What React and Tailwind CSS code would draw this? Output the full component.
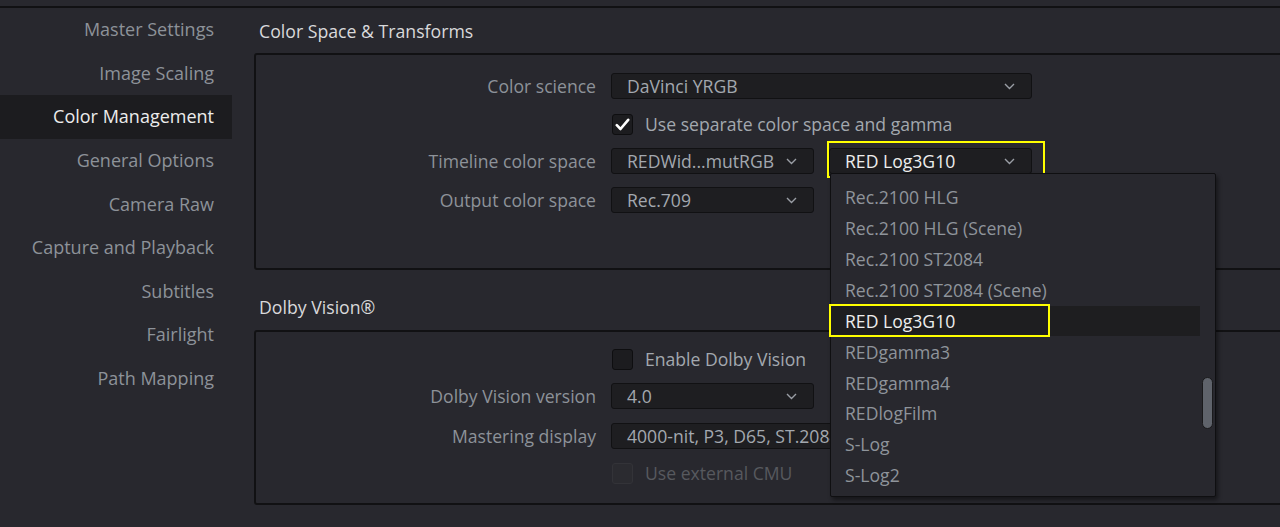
import React from 'react';

const FONT = { fontFamily: '"Open Sans", "Noto Sans", sans-serif' };

const sideItems = [
    'Master Settings',
    'Image Scaling',
    'Color Management',
    'General Options',
    'Camera Raw',
    'Capture and Playback',
    'Subtitles',
    'Fairlight',
    'Path Mapping',
];

const listItems = [
    'Rec.2100 HLG',
    'Rec.2100 HLG (Scene)',
    'Rec.2100 ST2084',
    'Rec.2100 ST2084 (Scene)',
    'RED Log3G10',
    'REDgamma3',
    'REDgamma4',
    'REDlogFilm',
    'S-Log',
    'S-Log2',
];

const Chevron = () => (
    <svg width="11" height="7" viewBox="0 0 11 7" fill="none" className="shrink-0">
        <path d="M1 1l4.5 4.5L10 1" stroke="#9a9ea5" strokeWidth="1.4" />
    </svg>
);

const Select = ({ value, width, bright }) => (
    <div
        className={`h-[26px] ${width} flex items-center justify-between pl-[15px] pr-[16px] rounded-[3px] bg-[#1e1e21] border border-[#111113] overflow-hidden`}
    >
        <span className={`whitespace-nowrap text-[17.6px] ${bright ? 'text-[#eeeeee]' : 'text-[#a3a8af]'}`}>{value}</span>
        <Chevron />
    </div>
);

const Checkbox = ({ checked, disabled }) => (
    <div
        className={`w-[21px] h-[21px] rounded-[3px] flex items-center justify-center shrink-0 ${
            disabled ? 'bg-[#2b2b30] border border-[#333338]' : 'bg-[#1c1c1f] border border-[#0e0e10]'
        }`}
    >
        {checked && (
            <svg width="15" height="13" viewBox="0 0 15 13" fill="none">
                <path d="M1.8 7.2l3.7 3.8L13.2 1.8" stroke="#ffffff" strokeWidth="2.6" strokeLinecap="round" strokeLinejoin="round" />
            </svg>
        )}
    </div>
);

const Label = ({ children }) => (
    <div className="w-[340px] text-right text-[17.6px] text-[#8d9299] whitespace-nowrap">{children}</div>
);

const Dropdown = () => (
    <div className="absolute left-[1px] top-[25px] w-[386px] h-[324px] bg-[#28282e] border border-[#0f0f11] rounded-[2px] shadow-[2px_3px_4px_rgba(0,0,0,0.45)] z-20 pt-[8px]">
        {listItems.map((item) => {
            const active = item === 'RED Log3G10';
            return (
                <div
                    key={item}
                    className={`relative h-[30.9px] mr-[15px] flex items-center pl-[14px] text-[17.6px] ${
                        active ? 'bg-[#1e1e20] text-[#eeeeee]' : 'text-[#8f949b]'
                    }`}
                >
                    {item}
                    {active && (
                        <div className="absolute left-[-2px] top-[-2px] w-[221px] h-[33px] border-2 border-[#ffff00]" />
                    )}
                </div>
            );
        })}
        <div className="absolute left-[371px] top-[203px] w-[11px] h-[52px] rounded-full bg-[#5f636b] border border-[#1a1a1c]" />
    </div>
);

export default function App() {
    return (
        <div className="w-[1280px] h-[527px] overflow-hidden bg-[#28282e] flex flex-col" style={FONT}>
            <div className="h-[6px] shrink-0 border-b-2 border-[#111113] box-content" />
            <div className="flex flex-1">
                {/* sidebar */}
                <div className="w-[232px] shrink-0 flex flex-col">
                    {sideItems.map((s) => (
                        <div
                            key={s}
                            className={`h-[43.6px] flex items-center justify-end pr-[18px] text-[18px] ${
                                s === 'Color Management' ? 'bg-[#1c1c1f] text-[#ececec]' : 'text-[#8d9299]'
                            }`}
                        >
                            {s}
                        </div>
                    ))}
                </div>

                {/* content */}
                <div className="flex-1 flex flex-col">
                    <div className="h-[45px] pl-[27px] pt-[11px] text-[17.7px] leading-[24px] text-[#d9d9db]">
                        Color Space &amp; Transforms
                    </div>
                    <div className="ml-[22px] w-[1040px] h-[217px] border-2 border-[#111113] rounded-[3px] pt-[18px]">
                        <div className="flex items-center h-[26px]">
                            <Label>Color science</Label>
                            <div className="ml-[15px]">
                                <Select value="DaVinci YRGB" width="w-[421px]" />
                            </div>
                        </div>
                        <div className="flex items-center h-[26px] mt-[12px] pl-[356px] gap-[12px]">
                            <Checkbox checked />
                            <span className="text-[17.6px] text-[#a3a8af]">Use separate color space and gamma</span>
                        </div>
                        <div className="flex items-center h-[26px] mt-[11px]">
                            <Label>Timeline color space</Label>
                            <div className="ml-[15px]">
                                <Select value="REDWid...mutRGB" width="w-[203px]" />
                            </div>
                            <div className="relative ml-[15px] z-10">
                                <Select value="RED Log3G10" width="w-[203px]" bright />
                                <div className="absolute left-[-2px] top-[-7px] w-[218px] h-[37px] border-2 border-[#ffff00]" />
                                <Dropdown />
                            </div>
                        </div>
                        <div className="flex items-center h-[26px] mt-[13px]">
                            <Label>Output color space</Label>
                            <div className="ml-[15px]">
                                <Select value="Rec.709" width="w-[203px]" />
                            </div>
                        </div>
                    </div>

                    <div className="h-[60px] pl-[27px] pt-[25px] text-[17.7px] leading-[24px] text-[#d9d9db]">
                        Dolby Vision®
                    </div>
                    <div className="ml-[22px] w-[1040px] h-[175px] border-2 border-[#111113] rounded-[3px] pt-[14px]">
                        <div className="flex items-center h-[26px] pl-[356px] gap-[12px]">
                            <Checkbox />
                            <span className="text-[17.6px] text-[#a3a8af]">Enable Dolby Vision</span>
                        </div>
                        <div className="flex items-center h-[26px] mt-[11px]">
                            <Label>Dolby Vision version</Label>
                            <div className="ml-[15px]">
                                <Select value="4.0" width="w-[203px]" />
                            </div>
                        </div>
                        <div className="flex items-center h-[26px] mt-[14px]">
                            <Label>Mastering display</Label>
                            <div className="ml-[15px]">
                                <Select value="4000-nit, P3, D65, ST.2084 (PQ)" width="w-[421px]" />
                            </div>
                        </div>
                        <div className="flex items-center h-[26px] mt-[11px] pl-[356px] gap-[12px]">
                            <Checkbox disabled />
                            <span className="text-[17.6px] text-[#57595e]">Use external CMU</span>
                        </div>
                    </div>
                </div>
            </div>
        </div>
    );
}
